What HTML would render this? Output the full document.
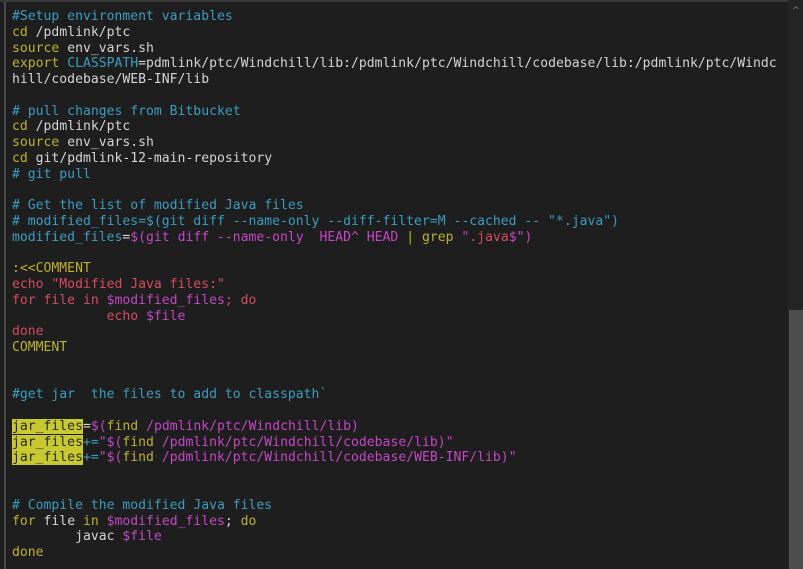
<!DOCTYPE html>
<html><head><style>
html,body{margin:0;padding:0;background:#1e1e1e;width:803px;height:569px;overflow:hidden}
.l{position:absolute;left:4px;top:0;width:2px;height:569px;background:#4a4a4a}
.t{position:absolute;left:0;top:0;width:788px;height:2px;background:#3a3a3a}
.sb{position:absolute;left:788px;top:0;width:15px;height:569px;background:#252525}
.th{position:absolute;left:789px;top:310px;width:14px;height:259px;background:#4d4d4d}
.ar{position:absolute;left:792px;top:6px;color:#888;font:9px "DejaVu Sans",sans-serif}
pre{position:absolute;left:12px;top:9px;margin:0;font-family:"DejaVu Sans Mono","Liberation Mono",monospace;font-size:13.1px;line-height:15.765px;color:#d4d4d4}
.c{color:#3b9cc0}.k{color:#bdb032}.m{color:#c447c4}.r{color:#d44c60}.h{background:#c8c830;color:#2a2a2a}
</style></head><body>
<div class="l"></div><div class="t"></div><div class="sb"></div><div class="th"></div><div class="ar">^</div>
<pre><span class="c">#Setup environment variables</span>
<span class="k">cd</span> /pdmlink/ptc
<span class="k">source</span> env_vars.sh
<span class="k">export</span> <span class="c">CLASSPATH</span>=pdmlink/ptc/Windchill/lib:/pdmlink/ptc/Windchill/codebase/lib:/pdmlink/ptc/Windc
hill/codebase/WEB-INF/lib

<span class="c"># pull changes from Bitbucket</span>
<span class="k">cd</span> /pdmlink/ptc
<span class="k">source</span> env_vars.sh
<span class="k">cd</span> git/pdmlink-12-main-repository
<span class="c"># git pull</span>

<span class="c"># Get the list of modified Java files</span>
<span class="c"># modified_files=$(git diff --name-only --diff-filter=M --cached -- "*.java")</span>
<span class="c">modified_files</span>=<span class="m">$(git diff --name-only  HEAD^ HEAD </span><span class="k">|</span> <span class="k">grep</span> <span class="m">"</span><span class="r">.java</span><span class="m">$")</span>

<span class="k">:&lt;&lt;COMMENT</span>
<span class="r">echo "Modified Java files:"</span>
<span class="r">for file in </span><span class="m">$modified_files</span><span class="r">; do</span>
<span class="r">            echo </span><span class="m">$file</span>
<span class="r">done</span>
<span class="k">COMMENT</span>


<span class="c">#get jar  the files to add to classpath`</span>

<span class="h">jar_files</span>=<span class="m">$(</span><span class="k">find</span> <span class="m">/pdmlink/ptc/Windchill/lib)</span>
<span class="h">jar_files</span><span class="c">+=</span><span class="m">"$(</span><span class="k">find</span> <span class="m">/pdmlink/ptc/Windchill/codebase/lib)"</span>
<span class="h">jar_files</span><span class="c">+=</span><span class="m">"$(</span><span class="k">find</span> <span class="m">/pdmlink/ptc/Windchill/codebase/WEB-INF/lib)"</span>


<span class="c"># Compile the modified Java files</span>
<span class="k">for</span> file <span class="k">in</span> <span class="m">$modified_files</span>; <span class="k">do</span>
        javac <span class="m">$file</span>
<span class="k">done</span></pre>
</body></html>
